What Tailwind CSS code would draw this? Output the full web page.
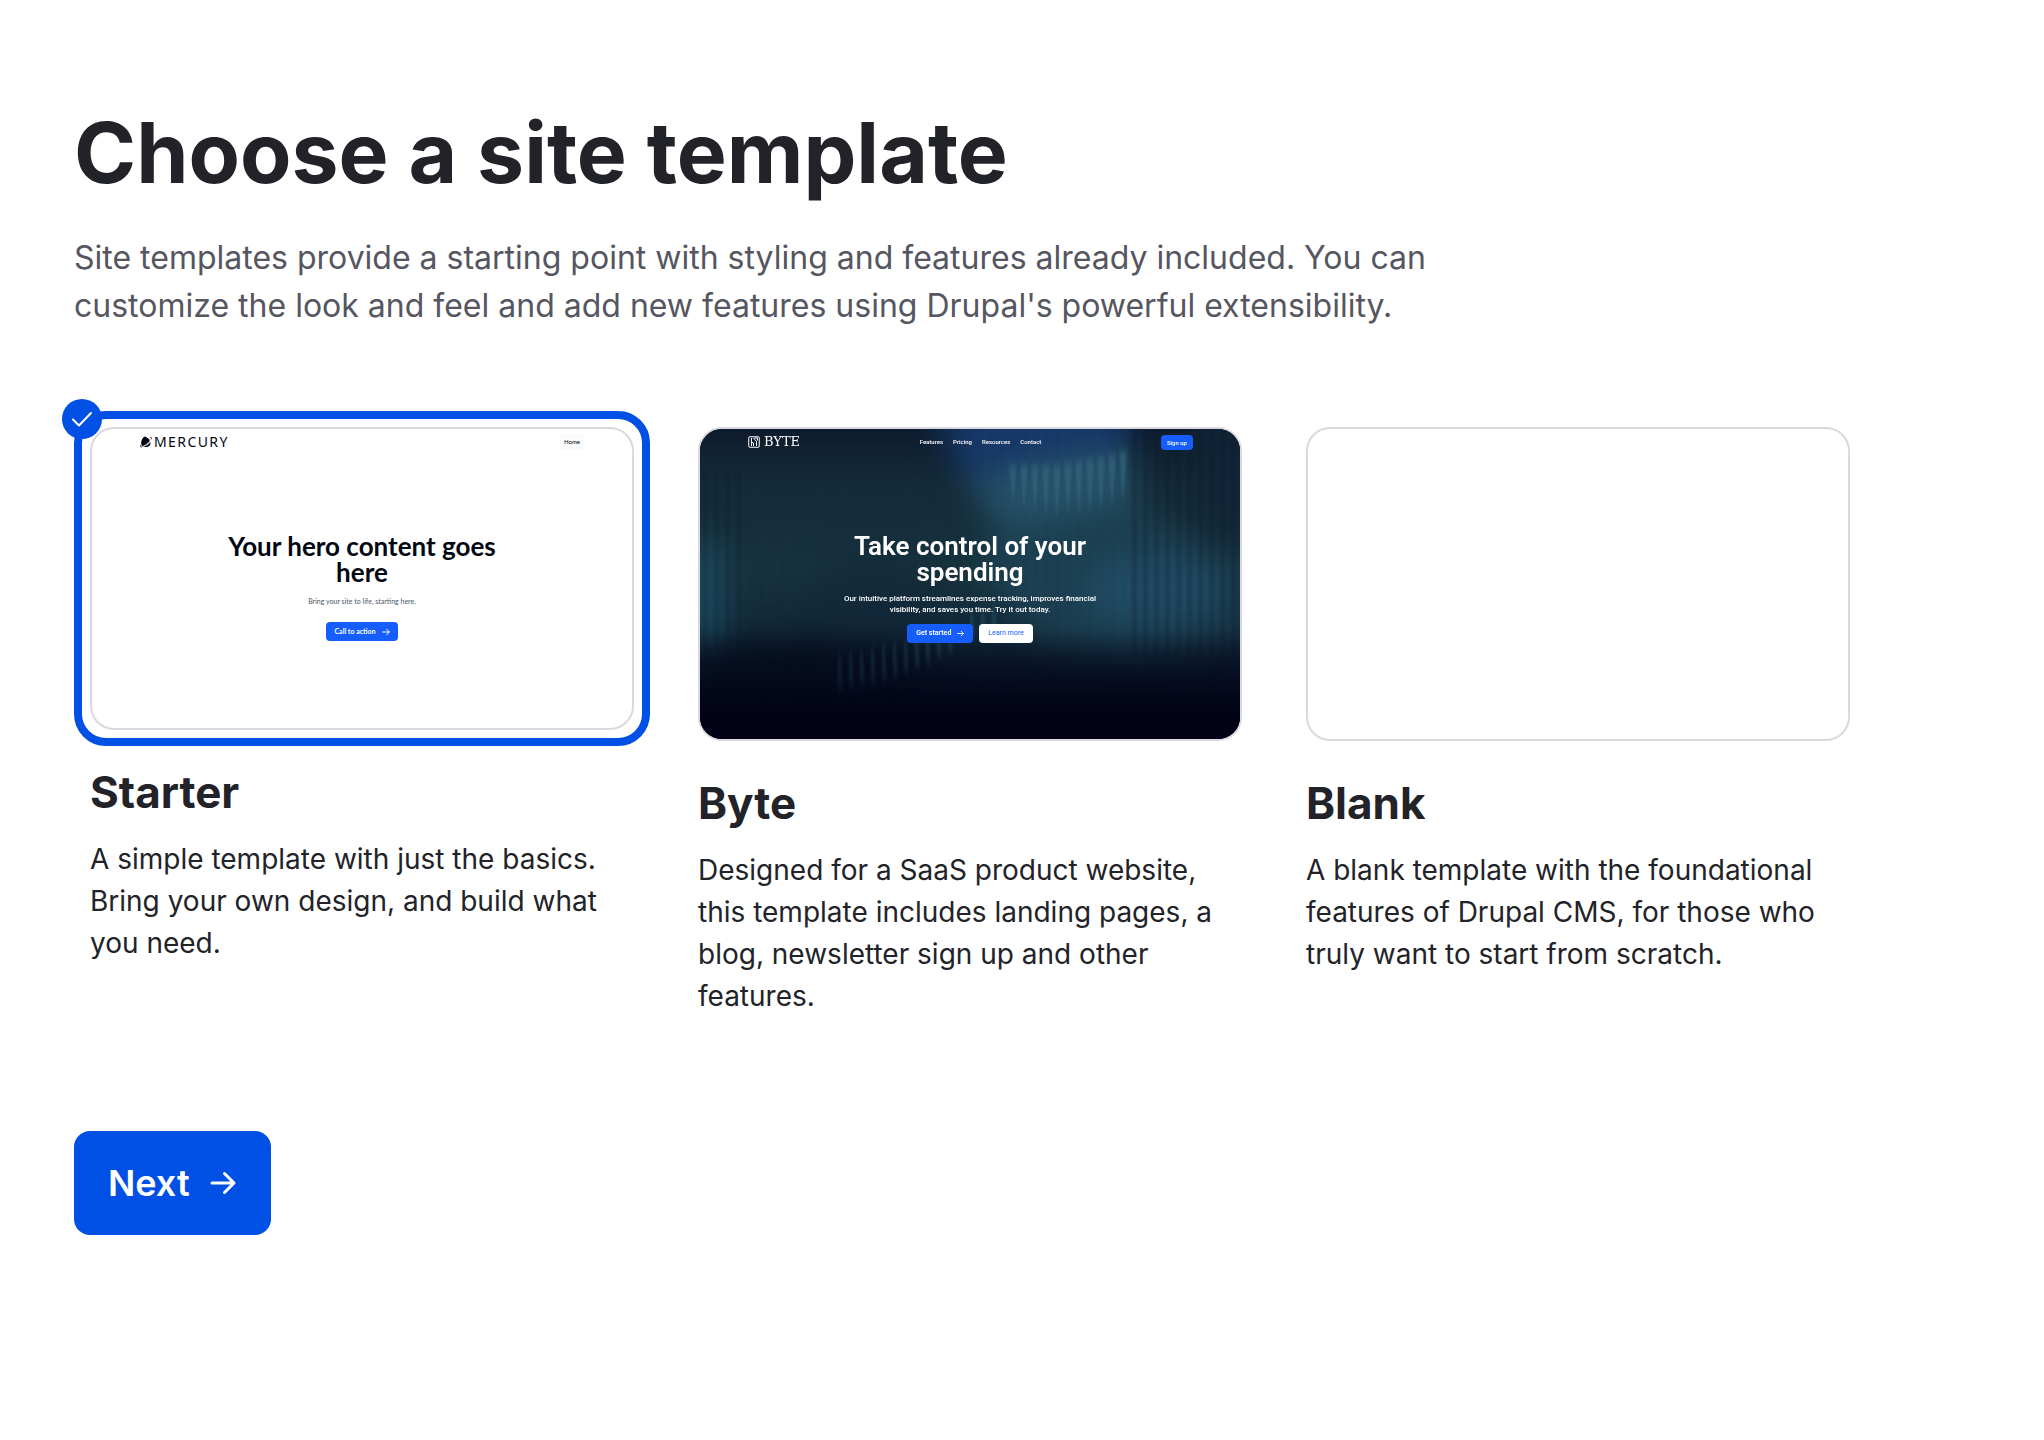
<!DOCTYPE html>
<html lang="en">
<head>
  <meta charset="UTF-8" />
  <meta name="viewport" content="width=device-width, initial-scale=1.0"/>
  <title>Choose a site template</title>
  <script src="https://cdn.jsdelivr.net/npm/@tailwindcss/browser@4"></script>
</head>
<body class="bg-white font-['Inter',sans-serif] text-[#222329]">

  <main class="max-w-[1940px] pt-[100px] pb-24 px-[74px]">
    <h1 class="text-[84px] leading-[106px] font-bold">Choose a site template</h1>
    <p class="mt-7 max-w-[1400px] text-[32px] leading-12 text-[#55565f]">Site templates provide a starting point with styling and features already included. You can customize the look and feel and add new features using Drupal's powerful extensibility.</p>

    <form>
      <div class="mt-[81px] grid grid-cols-3 gap-8 items-start">

        <!-- Starter -->
        <label class="block cursor-pointer">
          <input type="radio" name="template" value="starter" checked class="sr-only">
          <div class="relative rounded-[32px] border-8 border-[#0050e6] p-2">
            <span class="absolute -left-5 -top-5 flex size-10 items-center justify-center rounded-full bg-[#0050e6]">
              <svg class="size-6" viewBox="0 0 24 24" fill="none" stroke="#fff" stroke-width="2" stroke-linecap="round" stroke-linejoin="round"><path d="M3 12.500 9 18.500 21 6"/></svg>
            </span>
            <div class="flex h-[303px] flex-col rounded-3xl border-2 border-[#d9d9df] font-['Lato',sans-serif] text-[#030712]">
              <div class="flex h-[26px] items-center justify-between px-12">
                <div class="flex items-center gap-[2px]">
                  <svg class="size-3" viewBox="0 0 24 24" fill="currentColor"><path d="M10 1c2 2 4 1 5 3 4 1 4 4 5 7-4 5-9 9-15 11C2 18 1 12 4 7c1-3 3-5 6-6z"/><path d="M21 12c1 6-3 10-9 10-2 0-3 0-4-1 6-2 10-5 13-9z"/><path d="M17 5c3-2 6-3 6-1 0 4-9 14-20 18-3 1-2-2 0-4" fill="none" stroke="#fff" stroke-width="1.500"/><path d="M20 3c3-1 4 1 2 4M2 18c-2 3-1 5 2 4" fill="none" stroke="currentColor" stroke-width="1.500"/></svg>
                  <span class="font-['Noto_Sans',sans-serif] text-[14px] leading-4 tracking-widest">MERCURY</span>
                </div>
                <span class="rounded-sm bg-[#f9fafb] px-1 text-[6px] leading-4">Home</span>
              </div>
              <div class="flex flex-1 flex-col items-center pt-[78px] text-center">
                <div class="w-[280px] text-[26px] leading-[26px] font-bold">Your hero content goes here</div>
                <p class="mt-2 text-[7px] leading-4 text-[#4b5563]">Bring your site to life, starting here.</p>
                <div class="mt-[13px] flex h-[19px] items-center gap-[6px] rounded-sm bg-[#155dfc] px-2 text-[7px] font-bold text-white">
                  Call to action
                  <svg class="size-2" viewBox="0 0 24 24" fill="none" stroke="currentColor" stroke-width="3" stroke-linecap="round" stroke-linejoin="round"><path d="M2 12h20M14 4l8 8-8 8"/></svg>
                </div>
              </div>
            </div>
          </div>
          <div class="px-4">
            <h2 class="mt-[19px] text-[44px] leading-[54px] font-bold">Starter</h2>
            <p class="mt-[19px] text-[28px] leading-[42px]">A simple template with just the basics. Bring your own design, and build what you need.</p>
          </div>
        </label>

        <!-- Byte -->
        <label class="block cursor-pointer">
          <input type="radio" name="template" value="byte" class="sr-only">
          <div class="border-8 border-transparent p-2">
            <div class="relative isolate flex h-[314px] flex-col overflow-hidden rounded-3xl border-2 border-[#d9d9df] bg-[#020215] font-['Roboto',sans-serif] text-white">
              <svg class="absolute inset-0 -z-10 size-full" viewBox="0 0 540 310" preserveAspectRatio="none">
                <defs>
                  <linearGradient id="base" x1="0" y1="0" x2="0" y2="1">
                    <stop offset="0" stop-color="#0e1c2e"/>
                    <stop offset=".18" stop-color="#152c39"/>
                    <stop offset=".45" stop-color="#18343f"/>
                    <stop offset=".68" stop-color="#112838"/>
                    <stop offset="1" stop-color="#04081a"/>
                  </linearGradient>
                  <linearGradient id="edge" x1="0" y1="0" x2="1" y2="0">
                    <stop offset="0" stop-color="#081424" stop-opacity="0"/>
                    <stop offset=".5" stop-color="#081424" stop-opacity=".9"/>
                    <stop offset="1" stop-color="#081424" stop-opacity="0"/>
                  </linearGradient>
                  <linearGradient id="floor" x1="0" y1="0" x2="0" y2="1">
                    <stop offset="0" stop-color="#020216" stop-opacity="0"/>
                    <stop offset=".45" stop-color="#020216" stop-opacity=".55"/>
                    <stop offset=".8" stop-color="#020216"/>
                  </linearGradient>
                  <pattern id="ribs" width="11" height="310" patternUnits="userSpaceOnUse">
                    <rect width="11" height="310" fill="url(#edge)"/>
                  </pattern>
                  <filter id="soft" filterUnits="userSpaceOnUse" x="-100" y="-100" width="740" height="510" color-interpolation-filters="sRGB"><feGaussianBlur stdDeviation="16"/></filter>
                  <filter id="softer" filterUnits="userSpaceOnUse" x="0" y="0" width="540" height="310" color-interpolation-filters="sRGB"><feGaussianBlur stdDeviation="1 5"/></filter>
                </defs>
                <rect width="540" height="310" fill="url(#base)"/>
                <g filter="url(#soft)">
                  <path d="M225-40H430V20L400 45 270 60z" fill="#18396a"/>
                  <path d="M265 50 350 30 430 20 440 75 370 95 300 100z" fill="#27536a"/>
                  <path d="M290 100 430 70 540 140V205L440 225 340 210 280 150z" fill="#1f4558" opacity=".8"/>
                  <ellipse cx="455" cy="160" rx="70" ry="36" fill="#224d66"/>
                  <ellipse cx="6" cy="165" rx="18" ry="60" fill="#1f4f66"/>
                  <ellipse cx="110" cy="235" rx="130" ry="24" fill="#06101e" opacity=".8"/>
                  <ellipse cx="170" cy="170" rx="60" ry="50" fill="#12253a" opacity=".45"/>
                  <path d="M475-40H600V110H510z" fill="#12273a" opacity=".8"/>
                </g>
                <rect width="540" height="310" fill="url(#ribs)" opacity=".06"/>
                <rect x="429" width="111" height="230" fill="url(#ribs)" opacity=".25"/>
                <rect y="40" width="44" height="200" fill="url(#ribs)" opacity=".2"/>
                <!-- light ribs -->
                <g fill="#34687a" opacity=".7" filter="url(#softer)">
                  <path d="M309 36h8l-4 40zM320 36h8l-4 46zM331 36h8l-4 50zM342 36h8l-4 54zM353 36h8l-4 56zM364 34h8l-4 54zM375 32h8l-4 58zM386 30h8l-4 58zM397 28h8l-4 58zM408 26h8l-4 52zM419 22h8l-4 52z"/>
                </g>
                <g fill="#255067" opacity=".6" filter="url(#softer)">
                  <path d="M138 232l2-8 3 38h-5zM149 229l2-8 3 38h-5zM160 227l2-8 3 38h-5zM171 225l2-8 3 38h-5zM182 222l2-8 3 38h-5zM193 219l2-8 3 38h-5zM204 216l2-8 3 36h-5zM215 213l2-8 3 34h-5zM226 210l2-8 3 32h-5zM237 206l2-8 3 30h-5zM248 202l2-8 3 28h-5zM270 188l2-8 3 28h-5zM281 184l2-8 3 28h-5zM292 180l2-8 3 28h-5z"/>
                </g>
                <rect y="200" width="540" height="110" fill="url(#floor)"/>
              </svg>
              <div class="flex h-[26px] items-center justify-between pl-12 pr-[47px]">
                <div class="flex items-center gap-1">
                  <svg class="size-3" viewBox="0 0 24 24" fill="none" stroke="currentColor" stroke-width="2"><rect x="1.500" y="1.500" width="21" height="21" rx="2"/><path d="M7 4v16M7 12l4 2v6M11 4l6 7v9M13 4h6v5"/></svg>
                  <span class="font-['DejaVu_Serif',serif] text-[13px] leading-4">BYTE</span>
                </div>
                <div class="flex items-center gap-[10px] text-[6px] leading-3 font-medium">
                  <span>Features</span>
                  <span>Pricing</span>
                  <span>Resources</span>
                  <span>Contact</span>
                </div>
                <span class="rounded-sm bg-[#155dfc] px-[6px] text-[6px] leading-[15px] font-medium">Sign up</span>
              </div>
              <div class="flex flex-1 flex-col items-center pt-[78px] text-center">
                <div class="w-[260px] text-[26px] leading-[26px] font-semibold">Take control of your spending</div>
                <p class="mt-2 w-[280px] text-[8px] leading-[11px] font-medium">Our intuitive platform streamlines expense tracking, improves financial visibility, and saves you time. Try it out today.</p>
                <div class="mt-[9px] flex gap-[6px] text-[7px] font-semibold">
                  <div class="flex h-[19px] items-center gap-[6px] rounded-sm bg-[#155dfc] px-[9px]">
                    Get started
                    <svg class="size-[7px]" viewBox="0 0 24 24" fill="none" stroke="currentColor" stroke-width="3" stroke-linecap="round" stroke-linejoin="round"><path d="M2 12h20M14 4l8 8-8 8"/></svg>
                  </div>
                  <div class="flex h-[19px] items-center rounded-sm bg-white px-[9px] font-normal text-[#155dfc]">Learn more</div>
                </div>
              </div>
            </div>
          </div>
          <div class="px-4">
            <h2 class="mt-[19px] text-[44px] leading-[54px] font-bold">Byte</h2>
            <p class="mt-[19px] text-[28px] leading-[42px]">Designed for a SaaS product website, this template includes landing pages, a blog, newsletter sign up and other features.</p>
          </div>
        </label>

        <!-- Blank -->
        <label class="block cursor-pointer">
          <input type="radio" name="template" value="blank" class="sr-only">
          <div class="border-8 border-transparent p-2">
            <div class="h-[314px] rounded-3xl border-2 border-[#d9d9df]"></div>
          </div>
          <div class="px-4">
            <h2 class="mt-[19px] text-[44px] leading-[54px] font-bold">Blank</h2>
            <p class="mt-[19px] text-[28px] leading-[42px]">A blank template with the foundational features of Drupal CMS, for those who truly want to start from scratch.</p>
          </div>
        </label>
      </div>

      <button type="submit" class="mt-[114px] flex h-[104px] cursor-pointer items-center gap-[19px] rounded-2xl bg-[#0050e6] px-[34px] text-[36px] leading-[44px] font-semibold text-white hover:bg-blue-700">
        Next
        <svg class="size-7" viewBox="0 0 28 28" fill="none" stroke="currentColor" stroke-width="3" stroke-linecap="round" stroke-linejoin="round"><path d="M3 14h22M15.500 4.500 25 14l-9.500 9.500"/></svg>
      </button>
    </form>
  </main>

</body>
</html>
